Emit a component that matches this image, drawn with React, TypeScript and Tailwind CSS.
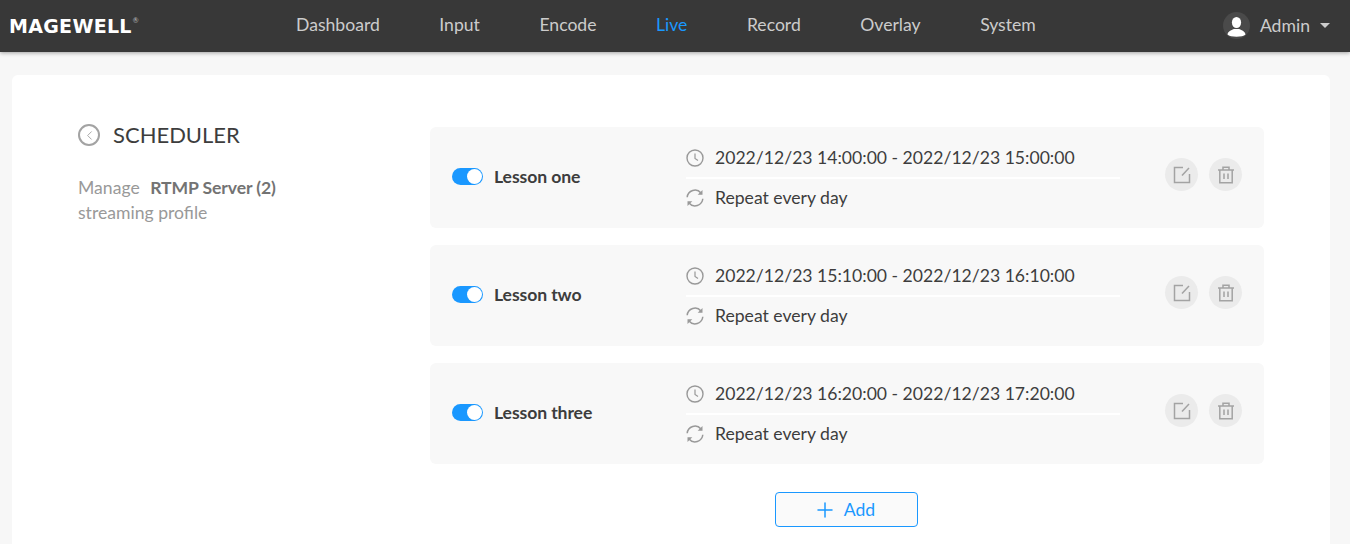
import { ChevronLeft, Plus } from 'lucide-react';

const navItems = ['Dashboard', 'Input', 'Encode', 'Live', 'Record', 'Overlay', 'System'];

const lessons = [
  { name: 'Lesson one', time: '2022/12/23 14:00:00 - 2022/12/23 15:00:00' },
  { name: 'Lesson two', time: '2022/12/23 15:10:00 - 2022/12/23 16:10:00' },
  { name: 'Lesson three', time: '2022/12/23 16:20:00 - 2022/12/23 17:20:00' },
];

const ClockIcon = () => (
  <svg width="18" height="18" viewBox="0 0 18 18" fill="none" stroke="#999" strokeWidth="1.4">
    <circle cx="9" cy="9" r="8" />
    <path d="M9 4.5V9.5L12 11.5" strokeWidth="1.2" />
  </svg>
);

const RepeatIcon = () => (
  <svg width="18" height="18" viewBox="0 0 18 18" fill="none" stroke="#999" strokeWidth="1.5">
    <path d="M1.2 8.2A7.8 7.8 0 0 1 15 4" />
    <path d="M16.8 9.8A7.8 7.8 0 0 1 3 14" />
    <path d="M16.5 1V5.8H11.7" fill="#999" stroke="none" />
    <path d="M1.500 17V12.200H6.300" fill="#999" stroke="none" />
  </svg>
);

const EditIcon = () => (
  <svg width="18" height="18" viewBox="0 0 18 18" fill="none" stroke="#a3a3a3" strokeWidth="1.5">
    <path d="M10 1.5H1.5V16.5H16.5V8" />
    <path d="M9 9.5L16 2" />
  </svg>
);

const TrashIcon = () => (
  <svg width="18" height="18" viewBox="0 0 18 18" fill="none" stroke="#a3a3a3" strokeWidth="1.5">
    <path d="M1 4H17" />
    <path d="M6 4V1.2H12V4" />
    <path d="M2.8 4V16.8H15.2V4" />
    <path d="M7 7.5V13M11 7.5V13" />
  </svg>
);

const UserAvatar = () => (
  <div className="flex h-[27px] w-[27px] items-center justify-center overflow-hidden rounded-full bg-[#4a4a4a]">
    <svg width="27" height="27" viewBox="0 0 27 27" fill="#fff">
      <ellipse cx="13.5" cy="10.5" rx="4.6" ry="5.6" />
      <path d="M4.5 22.5C5 18.8 9 18 11 17h5c2 1 6 1.800 6.500 5.500C20 25.500 7 25.500 4.500 22.500Z" />
    </svg>
  </div>
);

function ScheduleRow({ name, time }: { name: string; time: string }) {
  return (
    <div className="flex h-[101px] items-center rounded-md bg-[#f8f8f8] pl-[22px] pr-[22px]">
      <div className="mb-[1px] flex w-[234px] items-center">
        <div className="flex h-[17px] w-[31px] items-center justify-end rounded-full bg-[#1a98ff] pr-[1px]">
          <div className="h-[15px] w-[15px] rounded-full bg-white" />
        </div>
        <span className="ml-[11px] text-[17.6px] font-bold tracking-[-0.1px] text-[#3d3d3d]">{name}</span>
      </div>
      <div className="w-[434px] self-start">
        <div className="flex h-[52px] items-center gap-[11px] border-b-2 border-white pt-[12px]">
          <ClockIcon />
          <span className="text-[17.6px] text-[#3d3d3d]">{time}</span>
        </div>
        <div className="flex h-[38px] items-center gap-[11px]">
          <RepeatIcon />
          <span className="text-[17.6px] text-[#3d3d3d]">Repeat every day</span>
        </div>
      </div>
      <div className="ml-auto flex gap-[11px] pb-[6px]">
        <button className="flex h-[33px] w-[33px] items-center justify-center rounded-full bg-[#ebebeb]">
          <EditIcon />
        </button>
        <button className="flex h-[33px] w-[33px] items-center justify-center rounded-full bg-[#ebebeb]">
          <TrashIcon />
        </button>
      </div>
    </div>
  );
}

export default function App() {
  return (
    <div className="h-[544px] overflow-hidden bg-[#f7f7f7] font-['Lato',sans-serif]">
      <header className="relative flex h-[52px] items-center bg-[#383838] shadow-[0_1px_4px_rgba(0,0,0,0.35)]">
        <div className="ml-[9px] flex w-[287px] items-start">
          <span className="font-['DejaVu_Sans',sans-serif] text-[19px] font-bold leading-none tracking-[0.3px] text-white">
            MAGEWELL
          </span>
          <span className="ml-[1px] text-[7px] leading-none text-[#bbbbbb]">®</span>
        </div>
        <nav className="flex gap-[59.500px] pb-[2px]">
          {navItems.map((item) => (
            <a key={item} className={item === 'Live' ? 'text-[17.6px] text-[#1a98ff]' : 'text-[17.6px] text-[#cccccc]'}>
              {item}
            </a>
          ))}
        </nav>
        <div className="ml-auto mr-[20px] flex items-center">
          <UserAvatar />
          <span className="ml-[10px] mt-[1px] text-[17.6px] text-[#cccccc]">Admin</span>
          <span className="ml-[10px] h-0 w-0 border-x-[5.500px] border-t-[5.500px] border-x-transparent border-t-[#cccccc]" />
        </div>
      </header>

      <main className="ml-[12px] mr-[20px] mt-[23px] flex h-[500px] rounded-md bg-white px-[66px]">
        <aside className="w-[352px] pt-[49px]">
          <div className="flex items-center">
            <div className="flex h-[22px] w-[22px] items-center justify-center rounded-full border-2 border-[#a3a3a3]">
              <ChevronLeft size={15} color="#a3a3a3" strokeWidth={1.5} />
            </div>
            <h1 className="ml-[13px] text-[22px] leading-[18px] text-[#3d3d3d]">SCHEDULER</h1>
          </div>
          <div className="mt-[29px] text-[17.6px] leading-[25px] text-[#999999]">
            <p>
              Manage <span className="ml-[6px] font-bold tracking-[-0.1px] text-[#737373]">RTMP Server (2)</span>
            </p>
            <p>streaming profile</p>
          </div>
        </aside>
        <section className="flex-1 pt-[52px]">
          <div className="flex flex-col gap-[17px]">
            {lessons.map((l) => (
              <ScheduleRow key={l.name} name={l.name} time={l.time} />
            ))}
          </div>
          <div className="mr-[1px] mt-[28px] flex justify-center">
            <button className="flex h-[35px] w-[143px] items-center justify-center gap-[7px] rounded bg-[#fafafa] pt-[1px] text-[17.6px] text-[#1a98ff] outline outline-1 -outline-offset-1 outline-[#1a98ff]">
              <Plus size={24} strokeWidth={1.5} className="-ml-[5px]" />
              Add
            </button>
          </div>
        </section>
      </main>
    </div>
  );
}
